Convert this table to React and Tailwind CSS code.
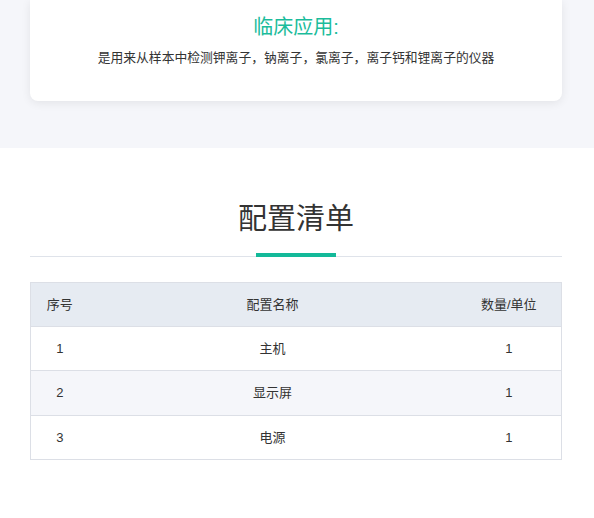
const rows = [
  { id: 1, name: "主机", qty: "1", bg: "bg-white" },
  { id: 2, name: "显示屏", qty: "1", bg: "bg-[#f5f6fa]" },
  { id: 3, name: "电源", qty: "1", bg: "bg-white" },
];

function App() {
  return (
    <div className="min-h-[518px] bg-white text-[#333] font-['Liberation_Sans','Noto_Sans_CJK_SC',sans-serif]">
      {/* top section with the card */}
      <section className="bg-[#f5f6fa] pl-[30px] pr-[32px] pb-[47px]">
        <div className="bg-white rounded-b-lg shadow-[0_2px_10px_rgba(0,0,0,0.08)] h-[101px] flex flex-col items-center pt-[15px]">
          <h3 className="text-[20px] leading-[24px] text-[#1bbc9b]">临床应用:</h3>
          <p className="mt-[10px] text-[12.8px] leading-[18px] text-[#333]">
            是用来从样本中检测钾离子，钠离子，氯离子，离子钙和锂离子的仪器
          </p>
        </div>
      </section>

      {/* config list */}
      <section className="pl-[30px] pr-[32px] pt-[52px] pb-[58px]">
        <div className="flex flex-col items-center border-b border-[#dfe3ea]">
          <h2 className="text-[29px] leading-[36px] text-[#333] mt-px">配置清单</h2>
          <div className="mt-[16px] -mb-px w-[80px] h-[4px] bg-[#13b999]" />
        </div>

        <table className="mt-[25px] w-full border-collapse border border-[#dcdfe6] text-[13px] text-[#333]">
          <thead>
            <tr className="bg-[#e6ebf2] h-[44px]">
              <th className="w-[58px] font-normal text-center">序号</th>
              <th className="font-normal text-center">配置名称</th>
              <th className="w-[105px] font-normal text-center">数量/单位</th>
            </tr>
          </thead>
          <tbody>
            {rows.map((r) => (
              <tr key={r.id} className={`${r.bg} h-[44.4px] border-t border-[#dcdfe6]`}>
                <td className="text-center">{r.id}</td>
                <td className="text-center">{r.name}</td>
                <td className="text-center">{r.qty}</td>
              </tr>
            ))}
          </tbody>
        </table>
      </section>
    </div>
  );
}

export default App;
